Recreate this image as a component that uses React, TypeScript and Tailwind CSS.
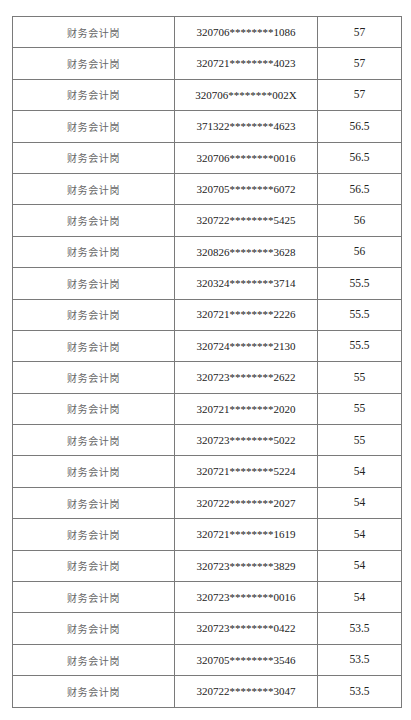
const ROWS: [string, string][] = [
  ["320706********1086", "57"],
  ["320721********4023", "57"],
  ["320706********002X", "57"],
  ["371322********4623", "56.5"],
  ["320706********0016", "56.5"],
  ["320705********6072", "56.5"],
  ["320722********5425", "56"],
  ["320826********3628", "56"],
  ["320324********3714", "55.5"],
  ["320721********2226", "55.5"],
  ["320724********2130", "55.5"],
  ["320723********2622", "55"],
  ["320721********2020", "55"],
  ["320723********5022", "55"],
  ["320721********5224", "54"],
  ["320722********2027", "54"],
  ["320721********1619", "54"],
  ["320723********3829", "54"],
  ["320723********0016", "54"],
  ["320723********0422", "53.5"],
  ["320705********3546", "53.5"],
  ["320722********3047", "53.5"],
]

export default function App() {
  return (
    <div className="h-[720px] w-[411px] bg-white pl-[12px] pt-[16px]">
      <div className="w-[390px] border-l border-t border-[#7a7a7a]">
        {ROWS.map(([id, score], i) => (
          <div key={i} className="flex h-[31.4px]">
            <div className="flex w-[162px] items-center justify-center border-b border-r border-[#7a7a7a] font-['Noto_Sans_CJK_SC',sans-serif] text-[10px] tracking-[0.6px] text-[#666]">
              财务会计岗
            </div>
            <div className="flex w-[143px] items-center justify-center border-b border-r border-[#7a7a7a] font-['Liberation_Serif',serif] text-[11px] text-[#222]">
              {id}
            </div>
            <div className="flex w-[84px] items-center justify-center border-b border-r border-[#7a7a7a] font-['Liberation_Serif',serif] text-[11.5px] text-[#222]">
              {score}
            </div>
          </div>
        ))}
      </div>
    </div>
  )
}
